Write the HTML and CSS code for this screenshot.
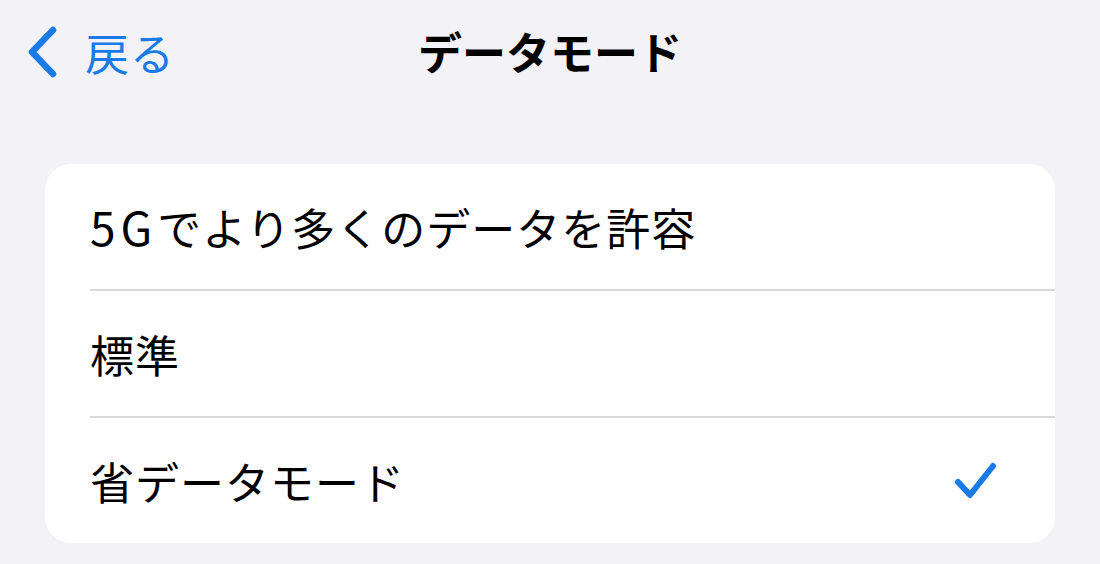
FILE: index.html
```html
<!DOCTYPE html>
<html lang="ja">
<head>
  <meta charset="utf-8">
  <title>データモード</title>
  <link rel="stylesheet" href="styles.css">
</head>
<body>
  <!-- Navigation bar -->
  <header class="nav-bar">
    <a class="nav-back" href="#">
      <svg class="nav-chevron" width="34" height="54" viewBox="0 0 34 54">
        <path d="M28 5 L7 27 L28 49" fill="none" stroke="currentColor" stroke-width="6.5" stroke-linecap="round" stroke-linejoin="round"/>
      </svg>
      <span class="nav-back-label">戻る</span>
    </a>
    <h1 class="nav-title">データモード</h1>
  </header>

  <!-- Options list -->
  <ul class="option-list">
    <li class="option-row">
      <span class="option-label"><span class="latin">5G</span>でより多くのデータを許容</span>
    </li>
    <li class="option-row">
      <span class="option-label">標準</span>
    </li>
    <li class="option-row is-selected">
      <span class="option-label">省データモード</span>
      <svg class="option-check" width="46" height="44" viewBox="0 0 46 44">
        <path d="M5 23 L17 36 L40 7" fill="none" stroke="currentColor" stroke-width="6" stroke-linecap="round" stroke-linejoin="round"/>
      </svg>
    </li>
  </ul>
</body>
</html>
```

FILE: styles.css
```css
html, body {
  margin: 0;
  padding: 0;
  height: 100%;
  overflow: hidden;
}

body {
  font-family: 'Noto Sans CJK JP', 'Noto Sans', sans-serif;
  background: #f2f2f7;
  color: #000;
}

/* Navigation bar */
.nav-bar {
  position: relative;
  height: 104px;
  display: flex;
  align-items: center;
  justify-content: center;
}

.nav-back {
  position: absolute;
  left: 25px;
  top: 25px;
  display: flex;
  align-items: center;
  gap: 26px;
  color: #1a7be6;
  text-decoration: none;
}

.nav-back-label {
  font-size: 44px;
  line-height: 54px;
  letter-spacing: 1px;
}

.nav-title {
  margin: 0;
  font-size: 44px;
  font-weight: bold;
  line-height: 54px;
  margin-top: -2px;
}

/* Options list */
.option-list {
  list-style: none;
  margin: 60px 45px 0;
  padding: 0 0 0 45px;
  background: #fff;
  border-radius: 26px;
  overflow: hidden;
}

.option-row {
  height: 125px;
  display: flex;
  align-items: center;
  justify-content: space-between;
  padding-right: 56px;
  border-bottom: 2px solid #d9d9dc;
}

.option-row:last-child {
  border-bottom: none;
}

.option-label {
  font-size: 44px;
  line-height: 60px;
  letter-spacing: 1px;
}

.option-label .latin {
  letter-spacing: 5px;
  font-size: 46px;
}

.option-check {
  color: #1a7be6;
}
```
